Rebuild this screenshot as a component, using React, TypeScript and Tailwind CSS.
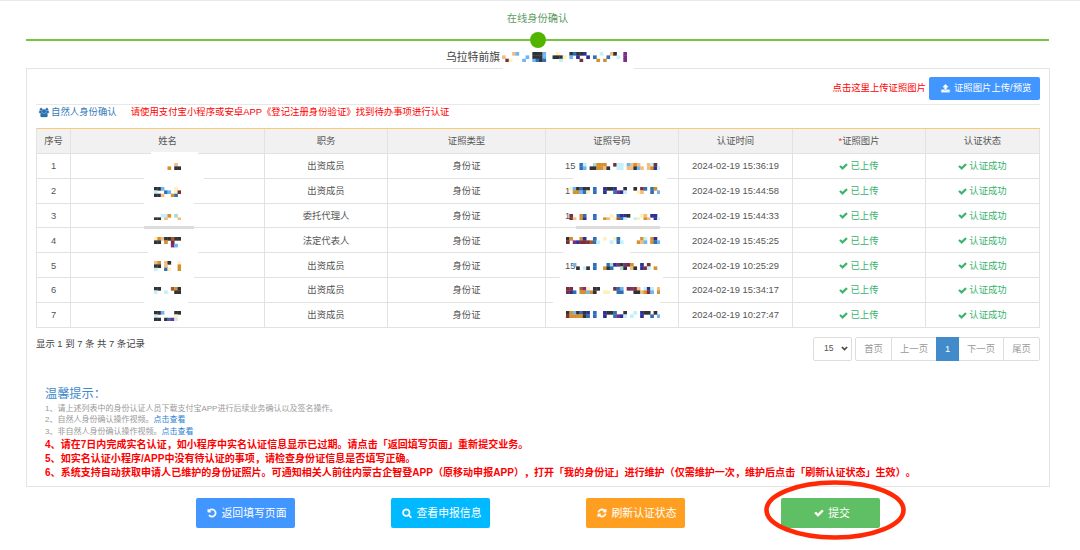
import type { ReactNode } from "react";

// Font Awesome 4 glyphs, drawn on its 1792 unit grid
const ICONS = {
  check: "M1671 566q0 40-28 68l-724 724-136 136q-28 28-68 28t-68-28l-136-136-362-362q-28-28-28-68t28-68l136-136q28-28 68-28t68 28l294 295 656-657q28-28 68-28t68 28l136 136q28 28 28 68z",
  undo: "M1664 896q0 156-61 298t-164 245-245 164-298 61q-172 0-327-72.5t-264-204.5q-7-10-6.5-22.5t8.5-20.5l137-138q10-9 25-9 16 2 23 12 73 95 179 147t225 52q104 0 198.5-40.5t163.5-109.5 109.5-163.5 40.5-198.5-40.5-198.5-109.5-163.5-163.5-109.5-198.5-40.5q-98 0-188 35.5t-160 101.5l137 138q31 30 14 69-17 40-59 40h-448q-26 0-45-19t-19-45v-448q0-42 40-59 39-17 69 14l130 129q107-101 244.5-156.5t284.5-55.5q156 0 298 61t245 164 164 245 61 298z",
  refresh: "M1639 1056q0 5-1 7-64 268-268 434.5t-478 166.5q-146 0-282.5-55t-243.5-157l-129 129q-19 19-45 19t-45-19-19-45v-448q0-26 19-45t45-19h448q26 0 45 19t19 45-19 45l-137 137q71 66 161 102t187 36q134 0 250-65t186-179q11-17 53-117 8-23 30-23h192q13 0 22.5 9.5t9.5 22.5zm25-800v448q0 26-19 45t-45 19h-448q-26 0-45-19t-19-45 19-45l138-138q-148-137-349-137-134 0-250 65t-186 179q-11 17-53 117-8 23-30 23h-199q-13 0-22.5-9.5t-9.5-22.5v-7q65-268 270-434.5t480-166.5q146 0 284 55.5t245 156.5l130-129q19-19 45-19t45 19 19 45z",
  search: "M1216 832q0-185-131.5-316.5t-316.5-131.5-316.5 131.5-131.5 316.5 131.5 316.5 316.5 131.5 316.5-131.5 131.5-316.5zm512 832q0 52-38 90t-90 38q-54 0-90-38l-343-342q-179 124-399 124-143 0-273.5-55.5t-225-150-150-225-55.5-273.5 55.5-273.5 150-225 225-150 273.5-55.5 273.5 55.5 225 150 150 225 55.5 273.5q0 220-124 399l343 343q37 37 37 90z",
  upload: "M1344 1472q0-26-19-45t-45-19-45 19-19 45 19 45 45 19 45-19 19-45zm256 0q0-26-19-45t-45-19-45 19-19 45 19 45 45 19 45-19 19-45zm128-224v320q0 40-28 68t-68 28h-1472q-40 0-68-28t-28-68v-320q0-40 28-68t68-28h427q21 56 70.5 92t110.5 36h256q61 0 110.5-36t70.5-92h427q40 0 68 28t28 68zm-325-648q-17 40-59 40h-256v448q0 26-19 45t-45 19h-256q-26 0-45-19t-19-45v-448h-256q-42 0-59-40-17-39 14-69l448-448q18-19 45-19t45 19l448 448q31 30 14 69z",
  users: "M593 896q-162 5-265 128h-134q-82 0-138-40.5t-56-118.5q0-353 124-353 6 0 43.5 21t97.5 42.5 119 21.5q67 0 133-23-5 37-5 66 0 139 81 256zm1071 637q0 120-73 189.5t-194 69.5h-874q-121 0-194-69.5t-73-189.5q0-53 3.5-103.5t14-109 26.5-108.5 43-97.5 62-81 85.5-53.5 111.5-20q10 0 43 21.5t73 48 107 48 135 21.5 135-21.5 107-48 73-48 43-21.5q61 0 111.5 20t85.5 53.5 62 81 43 97.5 26.5 108.5 14 109 3.5 103.5zm-1024-1277q0 106-75 181t-181 75-181-75-75-181 75-181 181-75 181 75 75 181zm704 384q0 159-112.5 271.5t-271.5 112.5-271.5-112.5-112.5-271.5 112.5-271.5 271.5-112.5 271.5 112.5 112.5 271.5zm576 225q0 78-56 118.5t-138 40.5h-134q-103-123-265-128 81-117 81-256 0-29-5-66 66 23 133 23 59 0 119-21.5t97.5-42.5 43.5-21q124 0 124 353zm-128-609q0 106-75 181t-181 75-181-75-75-181 75-181 181-75 181 75 75 181z",
};

function Icon({ name, className }: { name: keyof typeof ICONS; className?: string }) {
  return (
    <svg
      viewBox={name === "users" ? "0 0 1920 1792" : "0 0 1792 1792"}
      fill="currentColor"
      stroke="currentColor"
      strokeWidth="60"
      className={`shrink-0 overflow-visible ${className}`}
    >
      <path d={ICONS[name]} />
    </svg>
  );
}

// Pixelated blocks that hide private data, one letter per cell
const PALETTE: Record<string, string> = {
  k: "#303236", o: "#d4912f", p: "#f2bd80", y: "#fff1b8", b: "#70b5f2", B: "#2f6fb5",
  N: "#2e2f94", c: "#c2f0fb", R: "#7c2e35", m: "#7a2f86", g: "#a9dfc8", T: "#a65a26",
};
const CELL = 3.37;

function Mosaic({ rows, className }: { rows: string[]; className: string }) {
  return (
    <svg width={rows[0].length * CELL} height={rows.length * CELL} className={className}>
      {rows.flatMap((row, y) =>
        row.split("").map((c, x) =>
          PALETTE[c] ? <rect key={`${x}-${y}`} x={x * CELL} y={y * CELL} width={CELL + 0.3} height={CELL + 0.3} fill={PALETTE[c]} /> : null
        )
      )}
    </svg>
  );
}

const TITLE_MOSAIC = [
  "...pb....kkkb...y...kBkkN....c..pk..m",
  "p......b.kkkb..kkky.b.N..N.B...B..c.m",
  ".Ry...b..bBkB....c.....R....o.o.....m",
];

interface Person {
  role: string;
  time: string;
  prefix: string;
  name: string[];
  nameAt: string;
  id: string[];
  idAt: string;
}

const PEOPLE: Person[] = [
  {
    role: "出资成员", time: "2024-02-19 15:36:19", prefix: "15",
    name: ["......p.", "....o.kk"], nameAt: "top-[9px]",
    id: ["....Bc..gooo..Rcc.bpop..pcR.", "....Bb.kkoopk..cc.ppkbp.poNc"], idAt: "top-[9px]",
  },
  {
    role: "出资成员", time: "2024-02-19 15:44:58", prefix: "1",
    name: ["kkb...y.", "c..Bb.yR", "kkp..oB."], nameAt: "top-[8px]",
    id: [".ybkBkk.B..NkkN..k..k.RB.Bo.", "..oobBy.B..N..BmNc...yp..B.b"], idAt: "top-[8px]",
  },
  {
    role: "委托代理人", time: "2024-02-19 15:44:33", prefix: "1",
    name: ["..cco.g.", "kk.p...p"], nameAt: "top-[10px]",
    id: [".R..oB..B....y.BNNk...yp.NN.", ".Rp.oN..B..op.yTBc..cy.op.Nc"], idAt: "top-[10px]",
  },
  {
    role: "法定代表人", time: "2024-02-19 15:45:25", prefix: "",
    name: ["yopkkTkk", "kk.o.R..", ".....mb."], nameAt: "top-[9px]",
    id: ["ko..oN..B..y..yB......oc.oN.", "R.mNRRRTBc...c.Bc....opb.oBb"], idAt: "top-[9px]",
  },
  {
    role: "出资成员", time: "2024-02-19 10:25:29", prefix: "15",
    name: ["po.pk..y", "kk.p...o", "c..By..o"], nameAt: "top-[8px]",
    id: ["..b.....B...BgNmkmRo..N.R...", "...k.ck.B..okB..gk.pk.NRc.o."], idAt: "top-[10px]",
  },
  {
    role: "出资成员", time: "2024-02-19 15:34:17", prefix: "",
    name: ["kk...Tok", "c..c..kk"], nameAt: "top-[9px]",
    id: ["RR..Tmy.kk....RBb.RmRp.cNc.p", "RNB.oobok..yy..BB...kkpoRb.o"], idAt: "top-[9px]",
  },
  {
    role: "出资成员", time: "2024-02-19 10:27:47", prefix: "1",
    name: ["kkb...kk", "c.....y.", "kk.kBmc."], nameAt: "top-[8px]",
    id: ["kobkBkN.B..NkkB..k..c.Nkk.k.", "RooookB.B..N..BmNc.c..N..B.b"], idAt: "top-[8px]",
  },
];

// White strokes that wipe the row rules behind the hidden data
const NAME_WIPES = [
  "left-[80px] w-[47px]", "left-[73px] w-[60px]", "left-[73px] w-[50px]", "left-[73px] w-[50px]",
  "left-[77px] w-[50px]", "left-[73px] w-[50px]", "left-[73px] w-[44px]",
];
const ID_WIPES = [
  "", "left-[27px] w-[94px]", "", "left-[30px] w-[84px]",
  "left-[17px] w-[67px]", "left-[14px] w-[103px]", "left-[7px] w-[107px]",
];

const GRID = "grid grid-cols-[34px_194px_123px_158px_133px_114px_133px_114px]";

function Cell({ children, className = "" }: { children?: ReactNode; className?: string }) {
  return (
    <div className={`relative flex items-center justify-center border-r border-b border-[#e2e2e2] pt-px ${className}`}>
      {children}
    </div>
  );
}

function Wipe({ index, at }: { index: number; at: string }) {
  if (!at) return null;
  return <span className={`absolute ${at} ${index === 3 ? "-top-[2px] h-[3px] bg-[#dcdcdc]" : "-top-[2px] h-[4px] bg-white"}`} />;
}

function PeopleTable() {
  return (
    <div className="mt-[8px] border-t border-l border-t-[#ffc876] border-l-[#e2e2e2] text-[9.35px] text-[#555]">
      <div className={`${GRID} h-[25px] bg-[#f1f1f1] text-[#555]`}>
        <Cell>序号</Cell>
        <Cell>姓名</Cell>
        <Cell>职务</Cell>
        <Cell>证照类型</Cell>
        <Cell>证照号码</Cell>
        <Cell>认证时间</Cell>
        <Cell><span className="text-red-500">*</span>证照图片</Cell>
        <Cell>认证状态</Cell>
      </div>
      {PEOPLE.map((p, i) => (
        <div key={i} className={`${GRID} h-[24.8px]`}>
          <Cell>{i + 1}</Cell>
          <Cell>
            <Wipe index={i} at={NAME_WIPES[i]} />
            <Mosaic rows={p.name} className={`absolute left-[83px] ${p.nameAt}`} />
          </Cell>
          <Cell>{p.role}</Cell>
          <Cell>身份证</Cell>
          <Cell>
            <Wipe index={i} at={ID_WIPES[i]} />
            <span className="absolute left-[19px]">{p.prefix}</span>
            <Mosaic rows={p.id} className={`absolute left-[20px] ${p.idAt}`} />
          </Cell>
          <Cell>{p.time}</Cell>
          <Cell className="gap-[2px] text-[#35b36b]"><Icon name="check" className="size-[9px]" />已上传</Cell>
          <Cell className="gap-[2px] text-[#35b36b]"><Icon name="check" className="size-[9px]" />认证成功</Cell>
        </div>
      ))}
    </div>
  );
}

function Pager() {
  return (
    <div className="flex h-[24px] text-[9.35px] text-[#999]">
      <div className="mr-[3px] flex w-[39px] items-center justify-between rounded-[2px] border border-[#ddd] pr-[3px] pl-[10px] text-[8.6px] text-[#555]">
        15
        <svg viewBox="0 0 8 5" className="h-[5px] w-[7px]" fill="none" stroke="#444" strokeWidth="1.8">
          <path d="M1 .8 4 3.8 7 .8" />
        </svg>
      </div>
      <div className="flex w-[37px] items-center justify-center rounded-l-[2px] border border-[#ddd]">首页</div>
      <div className="flex w-[44px] items-center justify-center border-y border-[#ddd]">上一页</div>
      <div className="flex w-[23px] items-center justify-center bg-[#428bca] text-white">1</div>
      <div className="flex w-[44px] items-center justify-center border-y border-[#ddd]">下一页</div>
      <div className="flex w-[37px] items-center justify-center rounded-r-[2px] border border-[#ddd]">尾页</div>
    </div>
  );
}

function Tips() {
  return (
    <div className="mt-[24px] pl-[9px] whitespace-nowrap [text-spacing-trim:space-all]">
      <h2 className="text-[12.2px] leading-[18px] text-[#428bca]">温馨提示：</h2>
      <div className="text-[8px] leading-[11.5px] text-[#999]">
        <p>1、请上述列表中的身份认证人员下载支付宝APP进行后续业务确认以及签名操作。</p>
        <p>2、自然人身份确认操作视频。<a className="text-[#2a7fd0]">点击查看</a></p>
        <p>3、非自然人身份确认操作视频。<a className="text-[#2a7fd0]">点击查看</a></p>
      </div>
      <div className="mt-px text-[10.05px] leading-[14.2px] font-bold text-[#ff0000]">
        <p>4、请在7日内完成实名认证，如小程序中实名认证信息显示已过期。请点击「返回填写页面」重新提交业务。</p>
        <p>5、如实名认证小程序/APP中没有待认证的事项，请检查身份证信息是否填写正确。</p>
        <p>6、系统支持自动获取申请人已维护的身份证照片。可通知相关人前往内蒙古企智登APP（原移动申报APP），打开「我的身份证」进行维护（仅需维护一次，维护后点击「刷新认证状态」生效）。</p>
      </div>
    </div>
  );
}

function ActionButton({ icon, className, children }: { icon: keyof typeof ICONS; className: string; children: ReactNode }) {
  return (
    <button className={`flex h-[30px] w-[99px] items-center justify-center gap-[4px] rounded-[2px] pl-[3px] text-[10.85px] whitespace-nowrap text-white ${className}`}>
      <Icon name={icon} className="size-[10px]" />
      {children}
    </button>
  );
}

export default function App() {
  return (
    <div className="flex h-[550px] w-[1080px] flex-col overflow-hidden border-t border-[#e6eaea] bg-white font-['Liberation_Sans','Noto_Sans_CJK_SC',sans-serif] text-[#444]">
      {/* Step header */}
      <header className="flex h-[67px] flex-col items-center pr-[31px] pl-[26px]">
        <div className="mt-[10px] h-[16px] text-[10.25px] leading-[16px] text-[#5c9c62]">在线身份确认</div>
        <div className="mt-[5px] flex h-[16px] w-full items-center">
          <div className="h-[2px] flex-1 bg-[#78c63f]" />
          <div className="size-[16px] rounded-full bg-[#52b400]" />
          <div className="h-[2px] flex-1 bg-[#78c63f]" />
        </div>
        <div className="mt-[1px] flex h-[16px] w-[183px] items-center gap-[2px] text-[10.8px] whitespace-nowrap">
          乌拉特前旗
          <Mosaic rows={TITLE_MOSAIC} className="shrink-0" />
        </div>
      </header>

      <main className="relative mx-[26px] h-[419px] w-[1024px] border border-[#e4e4e4] px-[9px]">
        <span className="absolute -top-[2px] left-[476px] h-[4px] w-[131px] bg-white" />
        <div className="flex h-[36px] items-center justify-end gap-[3px] border-b border-[#e8e8e8] pt-[4px]">
          <span className="text-[9.35px] text-[#ff0000]">点击这里上传证照图片</span>
          <button className="flex h-[23px] w-[111px] items-center gap-[4px] rounded-[2px] bg-[#4296ff] pl-[12px] text-[9.35px] whitespace-nowrap text-white">
            <Icon name="upload" className="size-[9px]" />
            证照图片上传/预览
          </button>
        </div>
        <div className="flex h-[15px] items-center text-[9.38px] [text-spacing-trim:space-all]">
          <Icon name="users" className="ml-[3px] h-[9px] w-[10px] text-[#2a6fb0]" />
          <span className="ml-[2px] text-[#3079b8]">自然人身份确认</span>
          <span className="ml-[14px] text-[#ff0000]">请使用支付宝小程序或安卓APP《登记注册身份验证》找到待办事项进行认证</span>
        </div>
        <PeopleTable />
        <div className="mt-[9px] flex justify-between">
          <span className="text-[9.4px] leading-[14px] text-[#444]">显示 1 到 7 条 共 7 条记录</span>
          <Pager />
        </div>
        <Tips />
      </main>

      <footer className="mt-[11px] flex gap-[96px] pl-[196px]">
        <ActionButton icon="undo" className="bg-[#4296ff]">返回填写页面</ActionButton>
        <ActionButton icon="search" className="bg-[#00b9ff]">查看申报信息</ActionButton>
        <ActionButton icon="refresh" className="bg-[#ff9f22]">刷新认证状态</ActionButton>
        <div className="relative">
          <ActionButton icon="check" className="bg-[#5fbf64]">提交</ActionButton>
          <svg viewBox="0 0 142 60" className="absolute -top-[18px] -left-[17px] h-[60px] w-[142px] max-w-none" fill="none">
            <ellipse cx="71" cy="30" rx="68.5" ry="27.5" stroke="#ff2a05" strokeWidth="4.6" />
          </svg>
        </div>
      </footer>
    </div>
  );
}
